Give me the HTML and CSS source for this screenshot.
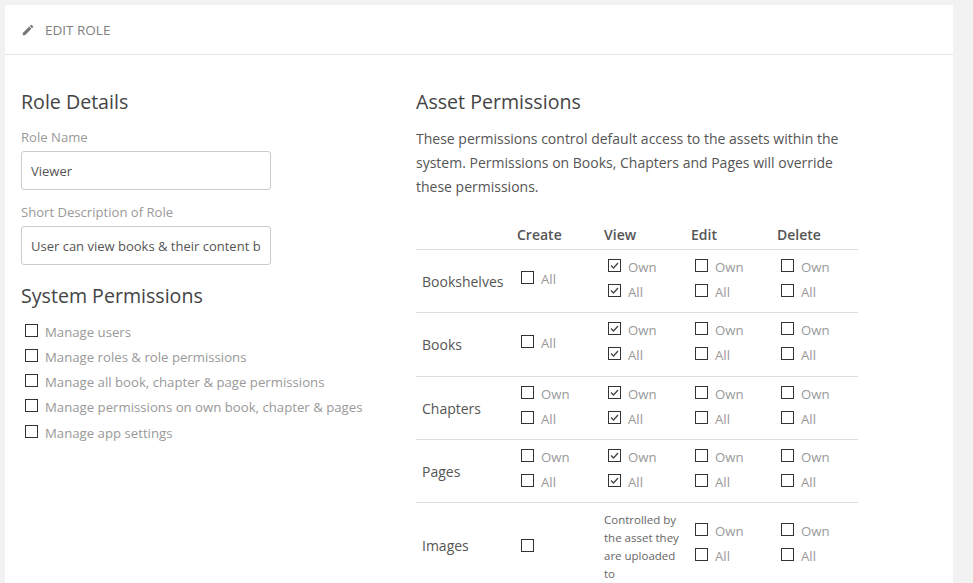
FILE: index.html
```html
<!DOCTYPE html>
<html lang="en">
<head>
<meta charset="utf-8">
<title>Edit Role</title>
<link rel="stylesheet" href="styles.css">
</head>
<body>
<main class="card">
  <header class="card-title">
    <svg class="pencil" viewBox="0 0 24 24" width="14" height="14"><path d="M3 17.25V21h3.75L17.81 9.94l-3.75-3.75L3 17.25zM20.71 7.04a1 1 0 0 0 0-1.41l-2.34-2.34a1 1 0 0 0-1.41 0l-1.83 1.83 3.75 3.75 1.83-1.83z"/></svg>
    <span>EDIT ROLE</span>
  </header>
  <div class="columns">
    <section class="left">
      <h3 class="heading">Role Details</h3>
      <label class="field-label">Role Name</label>
      <input class="text-input" type="text" value="Viewer">
      <label class="field-label second">Short Description of Role</label>
      <input class="text-input" type="text" value="User can view books &amp; their content but not edit">
      <h3 class="heading system">System Permissions</h3>
      <ul class="sys-list">
        <li><label class="opt"><input type="checkbox"><span>Manage users</span></label></li>
        <li><label class="opt"><input type="checkbox"><span>Manage roles &amp; role permissions</span></label></li>
        <li><label class="opt"><input type="checkbox"><span>Manage all book, chapter &amp; page permissions</span></label></li>
        <li><label class="opt"><input type="checkbox"><span>Manage permissions on own book, chapter &amp; pages</span></label></li>
        <li class="last"><label class="opt"><input type="checkbox"><span>Manage app settings</span></label></li>
      </ul>
    </section>
    <section class="right">
      <h3 class="heading">Asset Permissions</h3>
      <p class="intro">These permissions control default access to the assets within the system. Permissions on Books, Chapters and Pages will override these permissions.</p>
      <table class="perm">
        <thead>
          <tr><th></th><th>Create</th><th>View</th><th>Edit</th><th>Delete</th></tr>
        </thead>
        <tbody>
          <tr>
            <td class="name">Bookshelves</td>
            <td><label class="opt"><input type="checkbox"><span>All</span></label></td>
            <td><label class="opt"><input type="checkbox" checked><span>Own</span></label><label class="opt"><input type="checkbox" checked><span>All</span></label></td>
            <td><label class="opt"><input type="checkbox"><span>Own</span></label><label class="opt"><input type="checkbox"><span>All</span></label></td>
            <td><label class="opt"><input type="checkbox"><span>Own</span></label><label class="opt"><input type="checkbox"><span>All</span></label></td>
          </tr>
          <tr class="tall">
            <td class="name">Books</td>
            <td><label class="opt"><input type="checkbox"><span>All</span></label></td>
            <td><label class="opt"><input type="checkbox" checked><span>Own</span></label><label class="opt"><input type="checkbox" checked><span>All</span></label></td>
            <td><label class="opt"><input type="checkbox"><span>Own</span></label><label class="opt"><input type="checkbox"><span>All</span></label></td>
            <td><label class="opt"><input type="checkbox"><span>Own</span></label><label class="opt"><input type="checkbox"><span>All</span></label></td>
          </tr>
          <tr>
            <td class="name">Chapters</td>
            <td><label class="opt"><input type="checkbox"><span>Own</span></label><label class="opt"><input type="checkbox"><span>All</span></label></td>
            <td><label class="opt"><input type="checkbox" checked><span>Own</span></label><label class="opt"><input type="checkbox" checked><span>All</span></label></td>
            <td><label class="opt"><input type="checkbox"><span>Own</span></label><label class="opt"><input type="checkbox"><span>All</span></label></td>
            <td><label class="opt"><input type="checkbox"><span>Own</span></label><label class="opt"><input type="checkbox"><span>All</span></label></td>
          </tr>
          <tr>
            <td class="name">Pages</td>
            <td><label class="opt"><input type="checkbox"><span>Own</span></label><label class="opt"><input type="checkbox"><span>All</span></label></td>
            <td><label class="opt"><input type="checkbox" checked><span>Own</span></label><label class="opt"><input type="checkbox" checked><span>All</span></label></td>
            <td><label class="opt"><input type="checkbox"><span>Own</span></label><label class="opt"><input type="checkbox"><span>All</span></label></td>
            <td><label class="opt"><input type="checkbox"><span>Own</span></label><label class="opt"><input type="checkbox"><span>All</span></label></td>
          </tr>
          <tr class="images">
            <td class="name">Images</td>
            <td class="single"><label class="opt"><input type="checkbox"></label></td>
            <td class="note">Controlled by the asset they are uploaded to</td>
            <td><label class="opt"><input type="checkbox"><span>Own</span></label><label class="opt"><input type="checkbox"><span>All</span></label></td>
            <td><label class="opt"><input type="checkbox"><span>Own</span></label><label class="opt"><input type="checkbox"><span>All</span></label></td>
          </tr>
        </tbody>
      </table>
    </section>
  </div>
</main>
</body>
</html>
```
FILE: styles.css
```css
* { box-sizing: border-box; }
html { overflow: hidden; height: 583px; }
body {
  margin: 0;
  height: 583px;
  overflow: hidden;
  padding: 5px 20px 0 5px;
  background: #f2f2f2;
  color: #444;
  font-family: "Open Sans", "Noto Sans", sans-serif;
  font-size: 13px;
}
.card { background: #fff; min-height: 700px; }
.card-title {
  height: 50px;
  border-bottom: 1px solid #e5e5e5;
  display: flex;
  align-items: center;
  padding-left: 16px;
  gap: 10px;
  color: #808080;
  font-size: 13.5px;
}
.pencil { fill: #777; flex: none; }
.columns {
  display: grid;
  grid-template-columns: 395px 442px;
  padding: 32px 16px 0;
}
.heading { margin: 0; font-weight: 400; font-size: 19.6px; line-height: 30px; color: #444; }
.field-label { display: block; margin-top: 10px; color: #999; font-size: 13.1px; line-height: 20px; }
.field-label.second { margin-top: 12px; }
.text-input {
  display: block;
  width: 250px;
  height: 39px;
  margin-top: 4px;
  padding: 0 9px;
  border: 1px solid #ccc;
  border-radius: 3px;
  background: #fff;
  color: #555;
  font: inherit;
  font-size: 13px;
}
.heading.system { margin-top: 16px; }
.sys-list { list-style: none; margin: 9px 0 0; padding: 0 0 0 4px; }
.sys-list li { height: 25px; display: flex; align-items: center; }
.sys-list li.last { margin-top: 1px; }
.opt { display: flex; align-items: center; gap: 7px; color: #999; font-size: 13.2px; line-height: 25px; }
.opt input {
  appearance: none;
  flex: none;
  width: 13px;
  height: 13px;
  margin: 0 0 4px;
  border: 1px solid #333;
  background: #fff;
}
.opt input:checked {
  background: #fff url("data:image/svg+xml,%3Csvg xmlns='http://www.w3.org/2000/svg' viewBox='0 0 11 11'%3E%3Cpath d='M2 5.5l2.5 2.5L9 3' fill='none' stroke='%23444' stroke-width='1.3'/%3E%3C/svg%3E") center/11px no-repeat;
}
.intro { margin: 10px 0 0; font-size: 14px; line-height: 24px; color: #555; }
.perm { margin-top: 23px; width: 442px; table-layout: fixed; border-collapse: collapse; }
.perm th { height: 27px; padding: 0 0 2px; text-align: left; font-size: 14px; font-weight: 600; color: #555; }
.perm th:first-child, .perm td:first-child { width: 101px; }
.perm th:nth-child(2), .perm td:nth-child(2) { width: 87px; }
.perm th:nth-child(3), .perm td:nth-child(3) { width: 87px; }
.perm th:nth-child(4), .perm td:nth-child(4) { width: 86px; }
.perm tr { border-bottom: 1px solid #ddd; }
.perm tbody tr { height: 63px; }
.perm tbody tr.tall { height: 64px; }
.perm tbody tr.images { border-bottom: 0; }
.perm td { padding: 2px 0 4px 4px; vertical-align: middle; }
.perm td.name { padding: 3px 0 2px 6px; font-size: 14px; color: #555; }
.perm td.note { padding: 8px 4px 8px 0; font-size: 11.5px; line-height: 18px; color: #666; }
.perm .images td { padding: 0 0 6px 4px; }
.perm .images td.name { padding: 0 0 2px 6px; }
.perm .images td.single { padding: 3px 0 2px 4px; }
.perm .images td.note { padding: 8px 4px 8px 0; }
```
